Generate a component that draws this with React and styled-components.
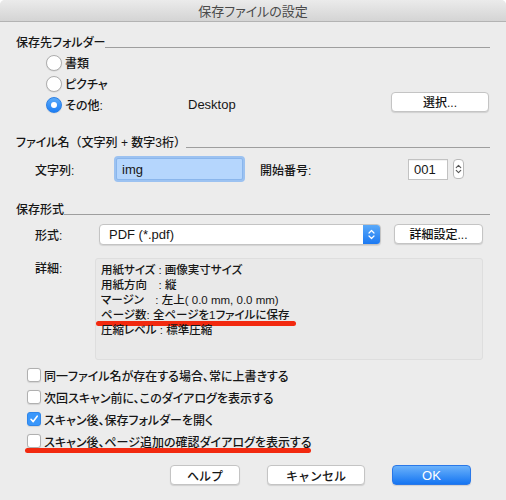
import React from 'react';
import styled, { createGlobalStyle } from 'styled-components';

const GlobalStyle = createGlobalStyle`
	html, body {
		margin: 0;
		padding: 0;
		background: #ffffff;
	}
	body {
		font-family: "Liberation Sans", "Noto Sans CJK JP", sans-serif;
		font-size: 12px;
		font-weight: 500;
		color: #161616;
		font-feature-settings: "palt";
	}
`;

const Window = styled.div`
	width: 506px;
	height: 500px;
	background: #ececec;
	border-radius: 5px 5px 0 0;
	overflow: hidden;
	display: flex;
	flex-direction: column;
`;

const TitleBar = styled.div`
	height: 22px;
	flex-shrink: 0;
	box-sizing: border-box;
	background: linear-gradient(#ebebeb, #d4d4d4);
	border-bottom: 1px solid #b3b3b3;
	display: flex;
	align-items: center;
	justify-content: center;
	font-size: 13px;
	font-weight: 400;
	color: #4a4a4a;
`;

const Body = styled.div`
	padding: 12px 16px 0 16px;
	display: flex;
	flex-direction: column;
`;

const SectionHeader = styled.div`
	display: flex;
	align-items: flex-end;
	height: 18px;
	margin-top: ${(p) => p.$top || 0}px;
	span {
		line-height: 18px;
		white-space: nowrap;
	}
`;

// full-width parens keep their width like the mac dialog
const Paren = styled.span`
	font-feature-settings: normal;
`;

const Rule = styled.div`
	flex: 1;
	height: 0;
	border-top: 1px solid #9e9e9e;
	margin-bottom: 4px;
`;

const RadioGroup = styled.div`
	display: flex;
	flex-direction: column;
	padding-left: 30px;
`;

const RadioRow = styled.div`
	display: flex;
	align-items: center;
	height: 21px;
`;

const RadioLabel = styled.label`
	display: flex;
	align-items: center;
	gap: 3px;
	width: 142px;
	flex-shrink: 0;
`;

const RadioDot = styled.span`
	width: 16px;
	height: 16px;
	box-sizing: border-box;
	border-radius: 50%;
	display: flex;
	align-items: center;
	justify-content: center;
	background: ${(p) => (p.$on ? 'linear-gradient(#5aaaf9, #1c7ef5)' : '#ffffff')};
	border: 1px solid ${(p) => (p.$on ? '#2a7fe6' : '#aeaeae')};
	box-shadow: 0 0.5px 1px rgba(0, 0, 0, 0.12);
	&::after {
		content: '';
		display: ${(p) => (p.$on ? 'block' : 'none')};
		width: 6px;
		height: 6px;
		border-radius: 50%;
		background: #ffffff;
	}
`;

const PathText = styled.span`
	font-size: 13px;
	flex: 1;
`;

const Button = styled.button`
	font-family: inherit;
	font-size: 12px;
	font-weight: 500;
	color: #161616;
	width: ${(p) => p.$w}px;
	height: 20px;
	padding: 0;
	border-radius: 4px;
	border: 1px solid #c4c4c4;
	background: #ffffff;
	box-shadow: 0 1px 1px rgba(0, 0, 0, 0.12);
	flex-shrink: 0;
`;

const PrimaryButton = styled(Button)`
	color: #ffffff;
	font-size: 13px;
	border-color: #2a78e8;
	background: linear-gradient(#6bb2fb, #1575f2);
`;

const PickButton = styled(Button)`
	margin: -6px 1px 0 0;
`;

const FieldRow = styled.div`
	display: flex;
	align-items: center;
	padding-left: 19px;
	height: ${(p) => p.$h || 22}px;
	margin-top: ${(p) => p.$top || 0}px;
`;

const FieldLabel = styled.span`
	width: ${(p) => p.$w}px;
	flex-shrink: 0;
	margin-left: ${(p) => p.$ml || 0}px;
`;

const TextInput = styled.div`
	width: ${(p) => p.$w}px;
	height: ${(p) => p.$h || 21}px;
	box-sizing: border-box;
	display: flex;
	align-items: center;
	padding-left: 5px;
	font-size: 13px;
	background: ${(p) => (p.$focus ? '#b5d6fd' : '#ffffff')};
	border: 1px solid ${(p) => (p.$focus ? '#8ab6ec' : '#c2c2c2')};
	box-shadow: ${(p) => (p.$focus ? '0 0 0 2px #9cc2f1' : 'inset 0 1px 0 rgba(0,0,0,0.05)')};
	border-radius: ${(p) => (p.$focus ? '2px' : '0')};
	flex-shrink: 0;
`;

const Stepper = styled.div`
	width: 11px;
	height: 20px;
	margin-left: 5px;
	box-sizing: border-box;
	border: 1px solid #b9b9b9;
	border-radius: 4px;
	background: #ffffff;
	display: flex;
	align-items: center;
	justify-content: center;
`;

const Select = styled.div`
	width: 282px;
	height: 21px;
	box-sizing: border-box;
	display: flex;
	align-items: stretch;
	border: 1px solid #c4c4c4;
	border-radius: 4px;
	background: #ffffff;
	box-shadow: 0 1px 1px rgba(0, 0, 0, 0.1);
	overflow: hidden;
	font-size: 13px;
	span {
		flex: 1;
		display: flex;
		align-items: center;
		padding-left: 9px;
	}
`;

const SelectArrow = styled.div`
	width: 17px;
	background: linear-gradient(#5aa9f9, #1b79f2);
	display: flex;
	align-items: center;
	justify-content: center;
`;

const FormatButton = styled(Button)`
	margin-left: 13px;
	margin-top: -2px;
`;

const DetailRow = styled.div`
	display: flex;
	padding-left: 19px;
	margin-top: 13px;
`;

const DetailLabel = styled.span`
	width: 60px;
	flex-shrink: 0;
	padding-top: 4px;
	line-height: 15px;
`;

const DetailBox = styled.div`
	width: 388px;
	height: 102px;
	box-sizing: border-box;
	padding: 4px 0 0 5px;
	background: #e9e9e9;
	border: 1px solid #dedede;
	border-radius: 3px;
	font-size: 11.5px;
	line-height: 15px;
`;

const DetailLine = styled.div`
	position: relative;
	white-space: pre;
`;

const Marker = styled.div`
	position: absolute;
	left: ${(p) => p.$left}px;
	width: ${(p) => p.$w}px;
	top: ${(p) => p.$top}px;
	height: 5px;
	border-radius: 3px;
	background: #f2290f;
`;

const CheckList = styled.div`
	display: flex;
	flex-direction: column;
	padding-left: 11px;
	margin-top: 4px;
`;

const CheckRow = styled.label`
	position: relative;
	display: flex;
	align-items: center;
	gap: 3px;
	height: 22px;
`;

const CheckBox = styled.span`
	width: 14px;
	height: 14px;
	box-sizing: border-box;
	border-radius: 3px;
	background: ${(p) => (p.$on ? '#3a97fb' : '#ffffff')};
	border: 1px solid ${(p) => (p.$on ? '#2f86ea' : '#b0b0b0')};
	box-shadow: 0 0.5px 1px rgba(0, 0, 0, 0.1);
	display: flex;
	align-items: center;
	justify-content: center;
`;

const ButtonBar = styled.div`
	display: flex;
	justify-content: flex-end;
	padding-right: 19px;
	margin-top: 13px;
	gap: 27px;
`;

const Chevrons = ({ color, size = 9 }) => (
	<svg width="7" height={size + 2} viewBox="0 0 7 11" fill="none" stroke={color} strokeWidth="1.2" strokeLinecap="round" strokeLinejoin="round">
		<path d="M1 4 L3.5 1.5 L6 4" />
		<path d="M1 7 L3.5 9.5 L6 7" />
	</svg>
);

const radios = [
	{ label: '書類', on: false },
	{ label: 'ピクチャ', on: false },
	{ label: 'その他:', on: true },
];

const details = [
	'用紙サイズ : 画像実寸サイズ',
	'用紙方向　: 縦',
	'マージン　: 左上( 0.0 mm, 0.0 mm)',
	'ページ数: 全ページを1ファイルに保存',
	'圧縮レベル : 標準圧縮',
];

const checks = [
	{ label: '同一ファイル名が存在する場合、常に上書きする', on: false },
	{ label: '次回スキャン前に、このダイアログを表示する', on: false },
	{ label: 'スキャン後、保存フォルダーを開く', on: true },
	{ label: 'スキャン後、ページ追加の確認ダイアログを表示する', on: false, mark: true },
];

export default function App() {
	return (
		<>
			<GlobalStyle />
			<Window>
				<TitleBar>保存ファイルの設定</TitleBar>
				<Body>
					<SectionHeader>
						<span>保存先フォルダー</span>
						<Rule />
					</SectionHeader>
					<RadioGroup>
						{radios.map((r, i) => (
							<RadioRow key={r.label}>
								<RadioLabel>
									<RadioDot $on={r.on} />
									{r.label}
								</RadioLabel>
								{i === 2 && (
									<>
										<PathText>Desktop</PathText>
										<PickButton $w={98}>選択...</PickButton>
									</>
								)}
							</RadioRow>
						))}
					</RadioGroup>

					<SectionHeader $top={19}>
						<span>
							ファイル名<Paren>（</Paren>文字列 + 数字3桁<Paren>）</Paren>
						</span>
						<Rule />
					</SectionHeader>
					<FieldRow $top={6}>
						<FieldLabel $w={81}>文字列:</FieldLabel>
						<TextInput $w={127} $h={22} $focus>img</TextInput>
						<FieldLabel $w={148} $ml={17}>開始番号:</FieldLabel>
						<TextInput $w={40}>001</TextInput>
						<Stepper>
							<Chevrons color="#555" size={8} />
						</Stepper>
					</FieldRow>

					<SectionHeader $top={21}>
						<span>保存形式</span>
						<Rule />
					</SectionHeader>
					<FieldRow $top={5} $h={21}>
						<FieldLabel $w={64}>形式:</FieldLabel>
						<Select>
							<span>PDF (*.pdf)</span>
							<SelectArrow>
								<Chevrons color="#ffffff" />
							</SelectArrow>
						</Select>
						<FormatButton $w={89}>詳細設定...</FormatButton>
					</FieldRow>

					<DetailRow>
						<DetailLabel>詳細:</DetailLabel>
						<DetailBox>
							{details.map((d, i) => (
								<DetailLine key={d}>
									{d}
									{i === 3 && <Marker $left={-5} $w={200} $top={13} />}
								</DetailLine>
							))}
						</DetailBox>
					</DetailRow>

					<CheckList>
						{checks.map((c) => (
							<CheckRow key={c.label}>
								<CheckBox $on={c.on}>
									{c.on && (
										<svg width="10" height="10" viewBox="0 0 10 10" fill="none" stroke="#ffffff" strokeWidth="1.6" strokeLinecap="round" strokeLinejoin="round">
											<path d="M2 5.3 L4.2 7.6 L8.2 2.2" />
										</svg>
									)}
								</CheckBox>
								{c.label}
								{c.mark && <Marker $left={-2} $w={286} $top={18} />}
							</CheckRow>
						))}
					</CheckList>

					<ButtonBar>
						<Button $w={70}>ヘルプ</Button>
						<Button $w={98}>キャンセル</Button>
						<PrimaryButton $w={79}>OK</PrimaryButton>
					</ButtonBar>
				</Body>
			</Window>
		</>
	);
}
